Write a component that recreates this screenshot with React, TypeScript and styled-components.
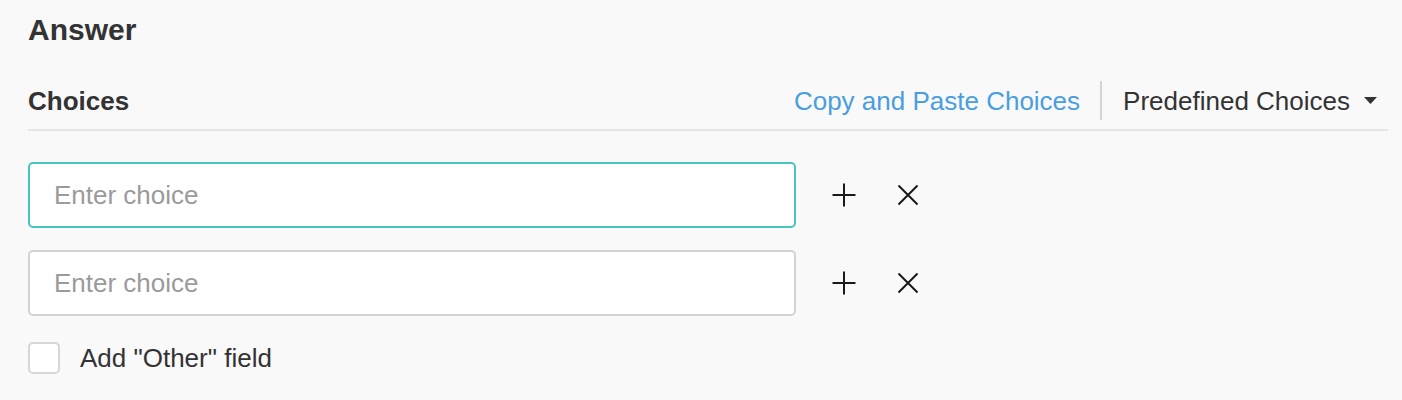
import React from "react";
import styled, { createGlobalStyle } from "styled-components";

const Global = createGlobalStyle`
  html, body { margin: 0; padding: 0; background: #f9f9f9; }
  body { font-family: "Liberation Sans", Arial, Helvetica, sans-serif; color: #333; }
  * { box-sizing: border-box; }
`;

const Page = styled.div`
  padding: 12px 14px 0 28px;
  width: 1402px;
  height: 400px;
  background: #f9f9f9;
`;

const Title = styled.h2`
  margin: 0;
  font-size: 30px;
  line-height: 36px;
  font-weight: 700;
  color: #333;
`;

const HeaderRow = styled.div`
  margin-top: 24px;
  height: 59px;
  display: flex;
  align-items: center;
  border-bottom: 2px solid #e6e6e6;
  padding-right: 11px;
`;

const SectionLabel = styled.div`
  font-size: 26px;
  line-height: 30px;
  font-weight: 700;
  color: #333;
  flex: 1;
`;

const LinkButton = styled.span`
  font-size: 26px;
  line-height: 30px;
  color: #4a9ee0;
  cursor: pointer;
`;

const Divider = styled.span`
  width: 2px;
  height: 39px;
  background: #d4d4d4;
  margin: 0 21px 0 20px;
`;

const Dropdown = styled.span`
  display: flex;
  align-items: center;
  gap: 14px;
  font-size: 26px;
  line-height: 30px;
  color: #333;
  cursor: pointer;
`;

const ChoiceList = styled.div`
  display: flex;
  flex-direction: column;
  gap: 22px;
  margin-top: 31px;
`;

const ChoiceRow = styled.div`
  display: flex;
  align-items: center;
`;

const ChoiceInput = styled.input<{ $focused?: boolean }>`
  width: 768px;
  height: 66px;
  border: 2px solid ${(p) => (p.$focused ? "#48c3c0" : "#d3d3d3")};
  border-radius: 5px;
  background: #fff;
  padding: 0 24px;
  font-family: "Liberation Sans", Arial, sans-serif;
  font-size: 26px;
  color: #333;
  outline: none;
  &::placeholder { color: #9b9b9b; }
`;

const IconButton = styled.button<{ $gap: number }>`
  width: 24px;
  height: 24px;
  padding: 0;
  margin-left: ${(p) => p.$gap}px;
  border: none;
  background: transparent;
  display: flex;
  align-items: center;
  justify-content: center;
  cursor: pointer;
`;

const CheckRow = styled.label`
  display: flex;
  align-items: center;
  gap: 20px;
  margin-top: 26px;
  font-size: 26px;
  line-height: 32px;
  color: #333;
`;

const CheckBox = styled.span`
  width: 32px;
  height: 32px;
  border: 2px solid #d6d6d6;
  border-radius: 5px;
  background: #fff;
`;

const PlusIcon = () => (
  <svg width="24" height="24" viewBox="0 0 24 24">
    <path d="M12 0.5V23.5M0.5 12H23.5" stroke="#1a1a1a" strokeWidth="2" fill="none" />
  </svg>
);

const CloseIcon = () => (
  <svg width="24" height="24" viewBox="0 0 24 24">
    <path d="M2.5 2.5L21.5 21.5M21.5 2.5L2.5 21.5" stroke="#1a1a1a" strokeWidth="2" fill="none" />
  </svg>
);

const Caret = () => (
  <svg width="13" height="7" viewBox="0 0 13 7">
    <path d="M0 0H13L6.5 7Z" fill="#333" />
  </svg>
);

export default function App() {
  return (
    <>
      <Global />
      <Page>
        <Title>Answer</Title>
        <HeaderRow>
          <SectionLabel>Choices</SectionLabel>
          <LinkButton>Copy and Paste Choices</LinkButton>
          <Divider />
          <Dropdown>
            Predefined Choices
            <Caret />
          </Dropdown>
        </HeaderRow>
        <ChoiceList>
          {[true, false].map((focused, i) => (
            <ChoiceRow key={i}>
              <ChoiceInput $focused={focused} placeholder="Enter choice" />
              <IconButton $gap={36} aria-label="Add choice">
                <PlusIcon />
              </IconButton>
              <IconButton $gap={40} aria-label="Remove choice">
                <CloseIcon />
              </IconButton>
            </ChoiceRow>
          ))}
        </ChoiceList>
        <CheckRow>
          <CheckBox />
          Add "Other" field
        </CheckRow>
      </Page>
    </>
  );
}
